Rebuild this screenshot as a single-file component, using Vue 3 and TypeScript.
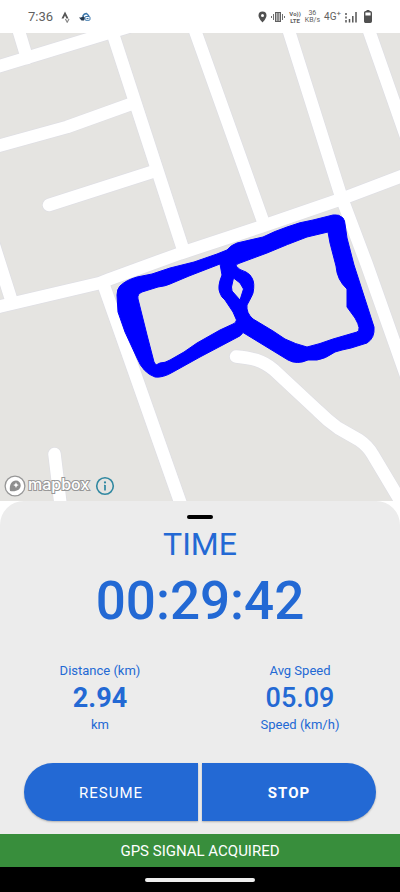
<script setup lang="ts">
interface Metric {
  label: string
  value: string
  unit: string
  strong: boolean
}

const elapsed = '00:29:42'

const metrics: Metric[] = [
  { label: 'Distance (km)', value: '2.94', unit: 'km', strong: true },
  { label: 'Avg Speed', value: '05.09', unit: 'Speed (km/h)', strong: false },
]

const roads: string[] = [
  'M-10 69 L128 27',
  'M17 25 L27 58',
  'M110 25 L182 246',
  'M-10 148 L0 145.5 L67 127 L131 104',
  'M49 205 L155 171',
  'M-10 233 L11 299',
  'M-10 309 L0 306.500 L100 283 L110 279 L180 253.500 L260 227 L340 199.500 L410 173',
  'M104 286 L183 510',
  'M193 25 L263 221',
  'M287 25 L341 196 L367 265 L407 378',
  'M367 25 L407 139',
  'M236 356.500 C252 358 262 360 274 370 L318 411 Q328 421 338 428 L359 440 Q368 446 373 455 L401 502',
  'M54.500 454 L61 508',
]

const track = [
  'M117 295 Q117 289 120 286 Q126 280 137 277 L152 274 L170 268 L194 262 L217 254 L227 250 Q231 245 237 243 L263 237 Q275 231 287 227 Q300 222 313 220 L333 215 Q339 214 343 218 Q345 221 345 224 L347 238 L354 265 L374 327 Q375 338 367 343 L351 348 Q341 350 335 352 Q325 359 317 360 L308 360 Q297 365 288 360 L243 332.500 Q241 336 236 338 L200 357 L173 372 Q163 378 155 377 Q143 373 137 358 L125 332 L118 312 Z',
  'M138 299 Q137 294 142 292 L158 287 Q166 286 170 284 L189 276 L220 264 L222 275 Q217 287 220 293 Q221 297 225 300 L233 312 L236.500 320 Q236 323 233 324 L220 330 L197 343 L184 352 L170 360 Q165 363 160 363 L156 365 L154 362 L147 335 L142 315 Z',
  'M233.500 278 L240 283 L243.500 289 L240 300 L232 291 L231.500 287 Z',
  'M236 266 Q236 264 240 263 L267 253 Q288 244 307 237 L328 232 L330 243 L336 266 Q337 280 347 289 L347 307 L355 318 Q362 330 357 332 L333 339 Q320 344 307 347 Q295 344 285 339 L273 331 L253 319 Q246 313 247 305 Q252 296 253 293 Q255 283 252 278 Q250 274 246 272 Q239 270 236 266 Z',
].join(' ')
</script>

<template>
  <main class="screen">
    <header class="status">
      <div class="status-left">
        <span class="clock">7:36</span>
        <svg class="strava" viewBox="0 0 10 12" aria-hidden="true">
          <path d="M.5 7.500 4 .5l3.500 7H5.400L4 4.600 2.600 7.500Z" fill="#555" />
          <path d="M4.400 8 6.200 11.200 8 8" fill="none" stroke="#888" stroke-width="1.200" />
        </svg>
        <svg class="rider" viewBox="0 0 12 10" aria-hidden="true">
          <path d="M0 5.500h2L4.500 4l1.500 2-1 2.500H2.500Z" fill="#26384d" />
          <path d="M3.500 4.500Q5 1.500 7.500 1.500L10 4" fill="none" stroke="#3c78ad" stroke-width="1.300" />
          <rect x="6" y="4.500" width="5" height="3.800" rx="1" fill="#fff" stroke="#3c78ad" />
          <path d="M7.500 6.500h2" stroke="#3c78ad" />
        </svg>
      </div>
      <div class="status-right">
        <svg class="pin" viewBox="0 0 9 12" aria-hidden="true">
          <path d="M4.500.5A4 4 0 0 0 .5 4.500C.5 7.500 4.500 11.500 4.500 11.500s4-4 4-7a4 4 0 0 0-4-4Z" fill="#505050" />
          <circle cx="4.500" cy="4.500" r="1.500" fill="#fff" />
        </svg>
        <svg class="vibrate" viewBox="0 0 14 12" aria-hidden="true">
          <path d="M.5 5v2M2.500 3v6M11.500 3v6M13.500 5v2" stroke="#707070" />
          <rect x="4.500" y="1.500" width="5" height="9" fill="#bbb" stroke="#606060" />
          <path d="M7 2v8" stroke="#606060" />
        </svg>
        <span class="tiny strong">Vo))<br />LTE</span>
        <span class="tiny">36<br />KB/s</span>
        <span class="network">4G<sup>+</sup></span>
        <svg class="signal" viewBox="0 0 12 12" aria-hidden="true">
          <path d="M1 2v2M1 5.500v2M1 9v2.500M4.500 8v3.500M7.800 5v6.500M11 1v10.500" stroke="#555" stroke-width="1.500" />
        </svg>
        <svg class="battery" viewBox="0 0 8 13" aria-hidden="true">
          <path d="M2.500 0h3v1.500h-3Z" fill="#505050" />
          <rect x=".7" y="1.700" width="6.600" height="10.600" rx="1" fill="#fff" stroke="#505050" stroke-width="1.400" />
          <path d="M1 5.500h6V12H1Z" fill="#505050" />
        </svg>
      </div>
    </header>

    <section class="map" aria-label="Route map">
      <svg class="map-canvas" viewBox="0 33 400 468" aria-hidden="true">
        <rect x="0" y="33" width="400" height="468" fill="#e5e4e1" />
        <g class="casing">
          <path v-for="d in roads" :key="d" :d="d" />
        </g>
        <g class="road">
          <path v-for="d in roads" :key="d" :d="d" />
        </g>
        <path class="track" :d="track" />
      </svg>
      <div class="attribution">
        <svg class="mapbox-mark" viewBox="0 0 22 22" aria-hidden="true">
          <circle cx="11" cy="11" r="9.900" fill="#fff" stroke="#979797" stroke-width="1.300" />
          <path d="M6 16C5 9.500 8 5.500 12 5.500a4.700 4.700 0 0 1 4.700 4.700C16.700 14.500 12.500 17 6 16Z" fill="#8f8f8f" />
          <path d="m12 7.300.9 1.900 1.900.9-1.900.9-.9 1.900-.9-1.900-1.900-.9 1.900-.9Z" fill="#fff" />
        </svg>
        <span class="wordmark">mapbox</span>
        <button class="info" type="button" aria-label="Map information">
          <svg viewBox="0 0 20 20" aria-hidden="true">
            <circle cx="10" cy="10" r="8.300" fill="none" stroke="#3188a1" stroke-width="1.600" />
            <circle cx="10" cy="6.400" r="1.100" fill="#3188a1" />
            <path d="M10 9v5.500" fill="none" stroke="#3188a1" stroke-width="1.700" />
            <path d="M9 9.300h1" fill="none" stroke="#3188a1" />
          </svg>
        </button>
      </div>
    </section>

    <section class="panel">
      <div class="handle"></div>
      <h1 class="title">TIME</h1>
      <div class="timer">{{ elapsed }}</div>
      <div class="metrics">
        <div v-for="m in metrics" :key="m.label" class="metric">
          <span class="caption">{{ m.label }}</span>
          <span class="value" :class="{ bold: m.strong }">{{ m.value }}</span>
          <span class="caption">{{ m.unit }}</span>
        </div>
      </div>
      <div class="actions">
        <button class="action resume" type="button">RESUME</button>
        <button class="action stop" type="button">STOP</button>
      </div>
    </section>

    <div class="gps" role="status">GPS SIGNAL ACQUIRED</div>
    <footer class="navbar"><span class="gesture"></span></footer>
  </main>
</template>

<style>
body {
  background: #fff;
}
</style>

<style scoped>
.screen {
  display: flex;
  flex-direction: column;
  min-height: 100vh;
  font-family: Roboto, "Liberation Sans", sans-serif;
  color: #2369d4;
}

.status {
  display: flex;
  align-items: center;
  justify-content: space-between;
  height: 33px;
  padding: 0 28px;
  box-sizing: border-box;
  color: #606060;
}

.status-left,
.status-right {
  display: flex;
  align-items: center;
}

.status-left {
  gap: 8px;
}

.status-right {
  gap: 4px;
}

.clock {
  font-size: 13px;
}

.strava {
  width: 10px;
  height: 12px;
}

.rider {
  width: 12px;
  height: 10px;
}

.pin {
  width: 9px;
  height: 12px;
}

.vibrate {
  width: 14px;
  height: 12px;
}

.tiny {
  font-size: 7px;
  line-height: 7px;
  text-align: center;
}

.strong {
  font-size: 6px;
  font-weight: 700;
}

.network {
  font-size: 10px;
  line-height: 12px;
}

.network sup {
  font-size: 8px;
  line-height: 0;
}

.signal {
  width: 12px;
  height: 12px;
}

.battery {
  width: 8px;
  height: 13px;
  margin-left: 3px;
}

.map {
  position: relative;
}

.map-canvas {
  display: block;
  width: 100%;
}

.casing path,
.road path {
  fill: none;
  stroke-linecap: round;
  stroke-linejoin: round;
}

.casing path {
  stroke: #dfdfe4;
  stroke-width: 14px;
}

.road path {
  stroke: #fff;
  stroke-width: 12.5px;
}

.track {
  fill: #00f;
  fill-rule: evenodd;
  stroke: #00f;
  stroke-width: 1px;
  stroke-linejoin: round;
}

.attribution {
  position: absolute;
  bottom: 4px;
  left: 4px;
  display: flex;
  align-items: center;
}

.mapbox-mark {
  width: 22px;
  height: 22px;
}

.wordmark {
  padding: 0 6px 4px 2px;
  font-family: Inter, sans-serif;
  font-size: 16px;
  font-weight: 500;
  line-height: 18px;
  color: #fff;
  -webkit-text-stroke: 2px #979797;
  paint-order: stroke fill;
}

.info {
  width: 20px;
  height: 20px;
  padding: 0;
  border: 0;
  background: none;
}

.info svg {
  display: block;
}

.panel {
  display: flex;
  flex: 1;
  flex-direction: column;
  align-items: center;
  padding: 14px 24px 13px;
  border-radius: 24px 24px 0 0;
  background: #ececec;
}

.handle {
  width: 26px;
  height: 4px;
  border-radius: 2px;
  background: #000;
}

.title {
  margin: 6px 0 0;
  font-size: 32px;
  font-weight: 400;
  line-height: 38px;
}

.timer {
  margin-top: 6px;
  font-size: 53px;
  font-weight: 500;
  line-height: 64px;
}

.metrics {
  display: grid;
  grid-template-columns: 1fr 1fr;
  align-self: stretch;
  margin: 28px -24px 0;
}

.metric {
  display: flex;
  flex-direction: column;
  align-items: center;
}

.caption {
  font-size: 13px;
  line-height: 20px;
}

.value {
  font-size: 27px;
  font-weight: 500;
  line-height: 34px;
}

.bold {
  font-weight: 700;
}

.actions {
  display: grid;
  grid-template-columns: 1fr 1fr;
  gap: 4px;
  align-self: stretch;
  margin-top: auto;
}

.action {
  height: 58px;
  padding: 2px 0 0;
  border: 0;
  background: #2369d4;
  box-shadow: 0 1px 2px rgb(0 0 0 / 25%);
  font-family: inherit;
  font-size: 15px;
  letter-spacing: 1px;
  color: #fff;
}

.resume {
  border-radius: 29px 0 0 29px;
}

.stop {
  border-radius: 0 29px 29px 0;
  font-weight: 700;
}

.gps {
  padding-top: 2px;
  background: #388e3c;
  font-size: 15px;
  line-height: 31px;
  text-align: center;
  color: #fff;
}

.navbar {
  display: flex;
  align-items: center;
  justify-content: center;
  height: 25px;
  background: #000;
}

.gesture {
  width: 110px;
  height: 4px;
  border-radius: 2px;
  background: #eee;
}
</style>
